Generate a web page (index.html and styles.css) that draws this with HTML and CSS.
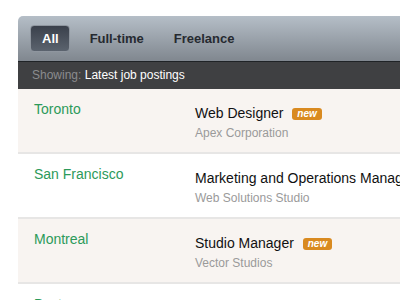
FILE: index.html
```html
<!DOCTYPE html>
<html lang="en">
<head>
    <meta charset="UTF-8">
    <title>Job board</title>
    <link rel="stylesheet" href="styles.css">
</head>
<body>
    <div class="board">
        <nav class="tabs">
            <a class="tab active">All</a>
            <a class="tab">Full-time</a>
            <a class="tab">Freelance</a>
        </nav>
        <div class="status"><span class="label">Showing:</span> Latest job postings</div>

        <ul class="jobs">
            <li class="job odd">
                <div class="place">Toronto</div>
                <div class="info">
                    <div class="title">Web Designer <span class="badge">new</span></div>
                    <div class="company">Apex Corporation</div>
                </div>
            </li>
            <li class="job">
                <div class="place">San Francisco</div>
                <div class="info">
                    <div class="title">Marketing and Operations Manager</div>
                    <div class="company">Web Solutions Studio</div>
                </div>
            </li>
            <li class="job odd">
                <div class="place">Montreal</div>
                <div class="info">
                    <div class="title">Studio Manager <span class="badge">new</span></div>
                    <div class="company">Vector Studios</div>
                </div>
            </li>
            <li class="job">
                <div class="place">Boston</div>
                <div class="info">
                    <div class="title">Front-end Developer</div>
                    <div class="company">Northside Media</div>
                </div>
            </li>
        </ul>
    </div>
</body>
</html>
```

FILE: styles.css
```css
body {
    margin: 0;
    padding: 16px 0 0 18px;
    background: #ffffff;
    font-family: "Liberation Sans", Arial, sans-serif;
    overflow: hidden;
}

.board {
    width: 400px;
}

.tabs {
    display: flex;
    align-items: center;
    height: 45px;
    padding-left: 12px;
    border-radius: 5px 0 0 0;
    background: linear-gradient(#b5bec7, #80878f);
    border-bottom: 1px solid #1f2326;
}

.tab {
    font-size: 13px;
    font-weight: bold;
    color: #262a30;
    margin-right: 30px;
}

.tab.active {
    color: #ffffff;
    padding: 5px 10px 5px 11px;
    margin-right: 20px;
    border-radius: 4px;
    border: 1px solid #8f969f;
    background: linear-gradient(#3a404b, #5b636e);
}

.status {
    height: 27px;
    line-height: 26px;
    padding-left: 14px;
    background: #3f4042;
    color: #ffffff;
    font-size: 12px;
}

.status .label {
    color: #8b8c8e;
}

.jobs {
    list-style: none;
    margin: 0;
    padding: 0;
}

.job {
    display: flex;
    height: 63px;
    border-bottom: 2px solid #e7e6e5;
    background: #ffffff;
}

.job.odd {
    background: #f8f4f1;
}

.place {
    width: 161px;
    padding: 12px 0 0 16px;
    font-size: 14px;
    color: #2c9a5a;
}

.info {
    padding-top: 16px;
    white-space: nowrap;
}

.title {
    font-size: 14px;
    color: #111111;
}

.badge {
    display: inline-block;
    margin-left: 5px;
    padding: 0 5px;
    height: 12px;
    line-height: 12px;
    border-radius: 3px;
    background: #d98a20;
    color: #ffffff;
    font-size: 10px;
    font-weight: bold;
    font-style: italic;
    vertical-align: 1px;
}

.company {
    margin-top: 5px;
    font-size: 12px;
    color: #9a9a9a;
}
```
